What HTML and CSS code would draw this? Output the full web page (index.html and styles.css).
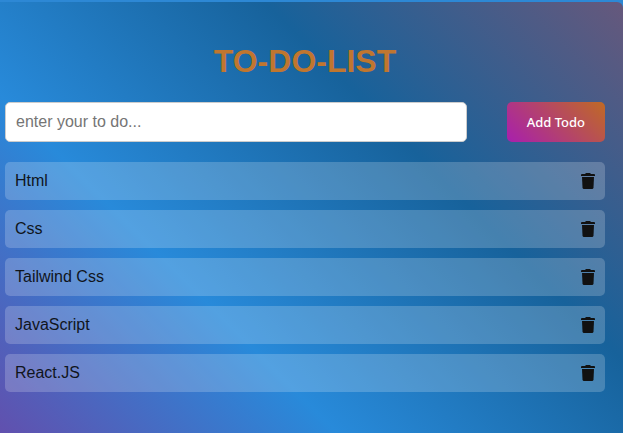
FILE: index.html
```html
<!DOCTYPE html>
<html lang="en">
<head>
<meta charset="utf-8">
<title>To-Do-List</title>
<link rel="stylesheet" href="styles.css">
</head>
<body>
<svg class="sprite" aria-hidden="true">
  <symbol id="trash" viewBox="0 0 14 16">
    <path d="M4 1 5 0h4l1 1h3q1 0 1 1v1H0V2q0-1 1-1z"/>
    <path d="M1 4h12l-.5 10.500q-.1 1.500-1.500 1.500H3q-1.400 0-1.500-1.500z"/>
  </symbol>
</svg>
<main class="card">
  <h1 class="title">TO-DO-LIST</h1>
  <form class="entry">
    <input class="entry-input" type="text" placeholder="enter your to do..." aria-label="New to do">
    <button class="entry-add" type="button">Add Todo</button>
  </form>
  <ul class="list">
    <li class="item"><span>Html</span><button class="remove" type="button" aria-label="Delete Html"><svg class="icon"><use href="#trash"/></svg></button></li>
    <li class="item"><span>Css</span><button class="remove" type="button" aria-label="Delete Css"><svg class="icon"><use href="#trash"/></svg></button></li>
    <li class="item"><span>Tailwind Css</span><button class="remove" type="button" aria-label="Delete Tailwind Css"><svg class="icon"><use href="#trash"/></svg></button></li>
    <li class="item"><span>JavaScript</span><button class="remove" type="button" aria-label="Delete JavaScript"><svg class="icon"><use href="#trash"/></svg></button></li>
    <li class="item"><span>React.JS</span><button class="remove" type="button" aria-label="Delete React.JS"><svg class="icon"><use href="#trash"/></svg></button></li>
  </ul>
</main>
</body>
</html>
```
FILE: styles.css
```css
* {
  box-sizing: border-box;
}

body {
  margin: 0;
  padding-top: 2px;
  background: #2d88d5;
  font-family: "Liberation Sans", Arial, sans-serif;
}

.sprite {
  display: none;
}

.card {
  min-height: calc(100vh - 2px);
  padding: 40px 18px 40px 5px;
  border-top-right-radius: 6px;
  background: linear-gradient(45deg, #6150ae 0%, #288ada 32%, #17629b 66%, #66587c 100%);
}

.title {
  margin: 0 0 22px;
  color: #c0762f;
  font-size: 32px;
  line-height: 38px;
  text-align: center;
}

.entry {
  display: flex;
  gap: 40px;
  margin-bottom: 20px;
}

.entry-input {
  flex: 1;
  min-width: 0;
  height: 40px;
  padding: 0 10px;
  border: 1px solid #ccc;
  border-radius: 5px;
  background: #fff;
  font: 16px "Liberation Sans", Arial, sans-serif;
}

.entry-input::placeholder {
  color: #757575;
}

.entry-add {
  height: 40px;
  padding: 0 20px;
  border: 0;
  border-radius: 5px;
  background: linear-gradient(45deg, #a81fae, #c06a24);
  color: #fff;
  font: 500 13px "Noto Sans", sans-serif;
}

.list {
  display: flex;
  flex-direction: column;
  gap: 10px;
  margin: 0;
  padding: 0;
  list-style: none;
}

.item {
  display: flex;
  align-items: center;
  justify-content: space-between;
  height: 38px;
  padding: 0 10px;
  border-radius: 5px;
  background: rgba(255, 255, 255, 0.2);
  color: #10151c;
  font-size: 16px;
}

.remove {
  display: flex;
  padding: 0;
  border: 0;
  background: none;
  color: #111;
}

.icon {
  width: 14px;
  height: 16px;
  fill: currentColor;
}
```
